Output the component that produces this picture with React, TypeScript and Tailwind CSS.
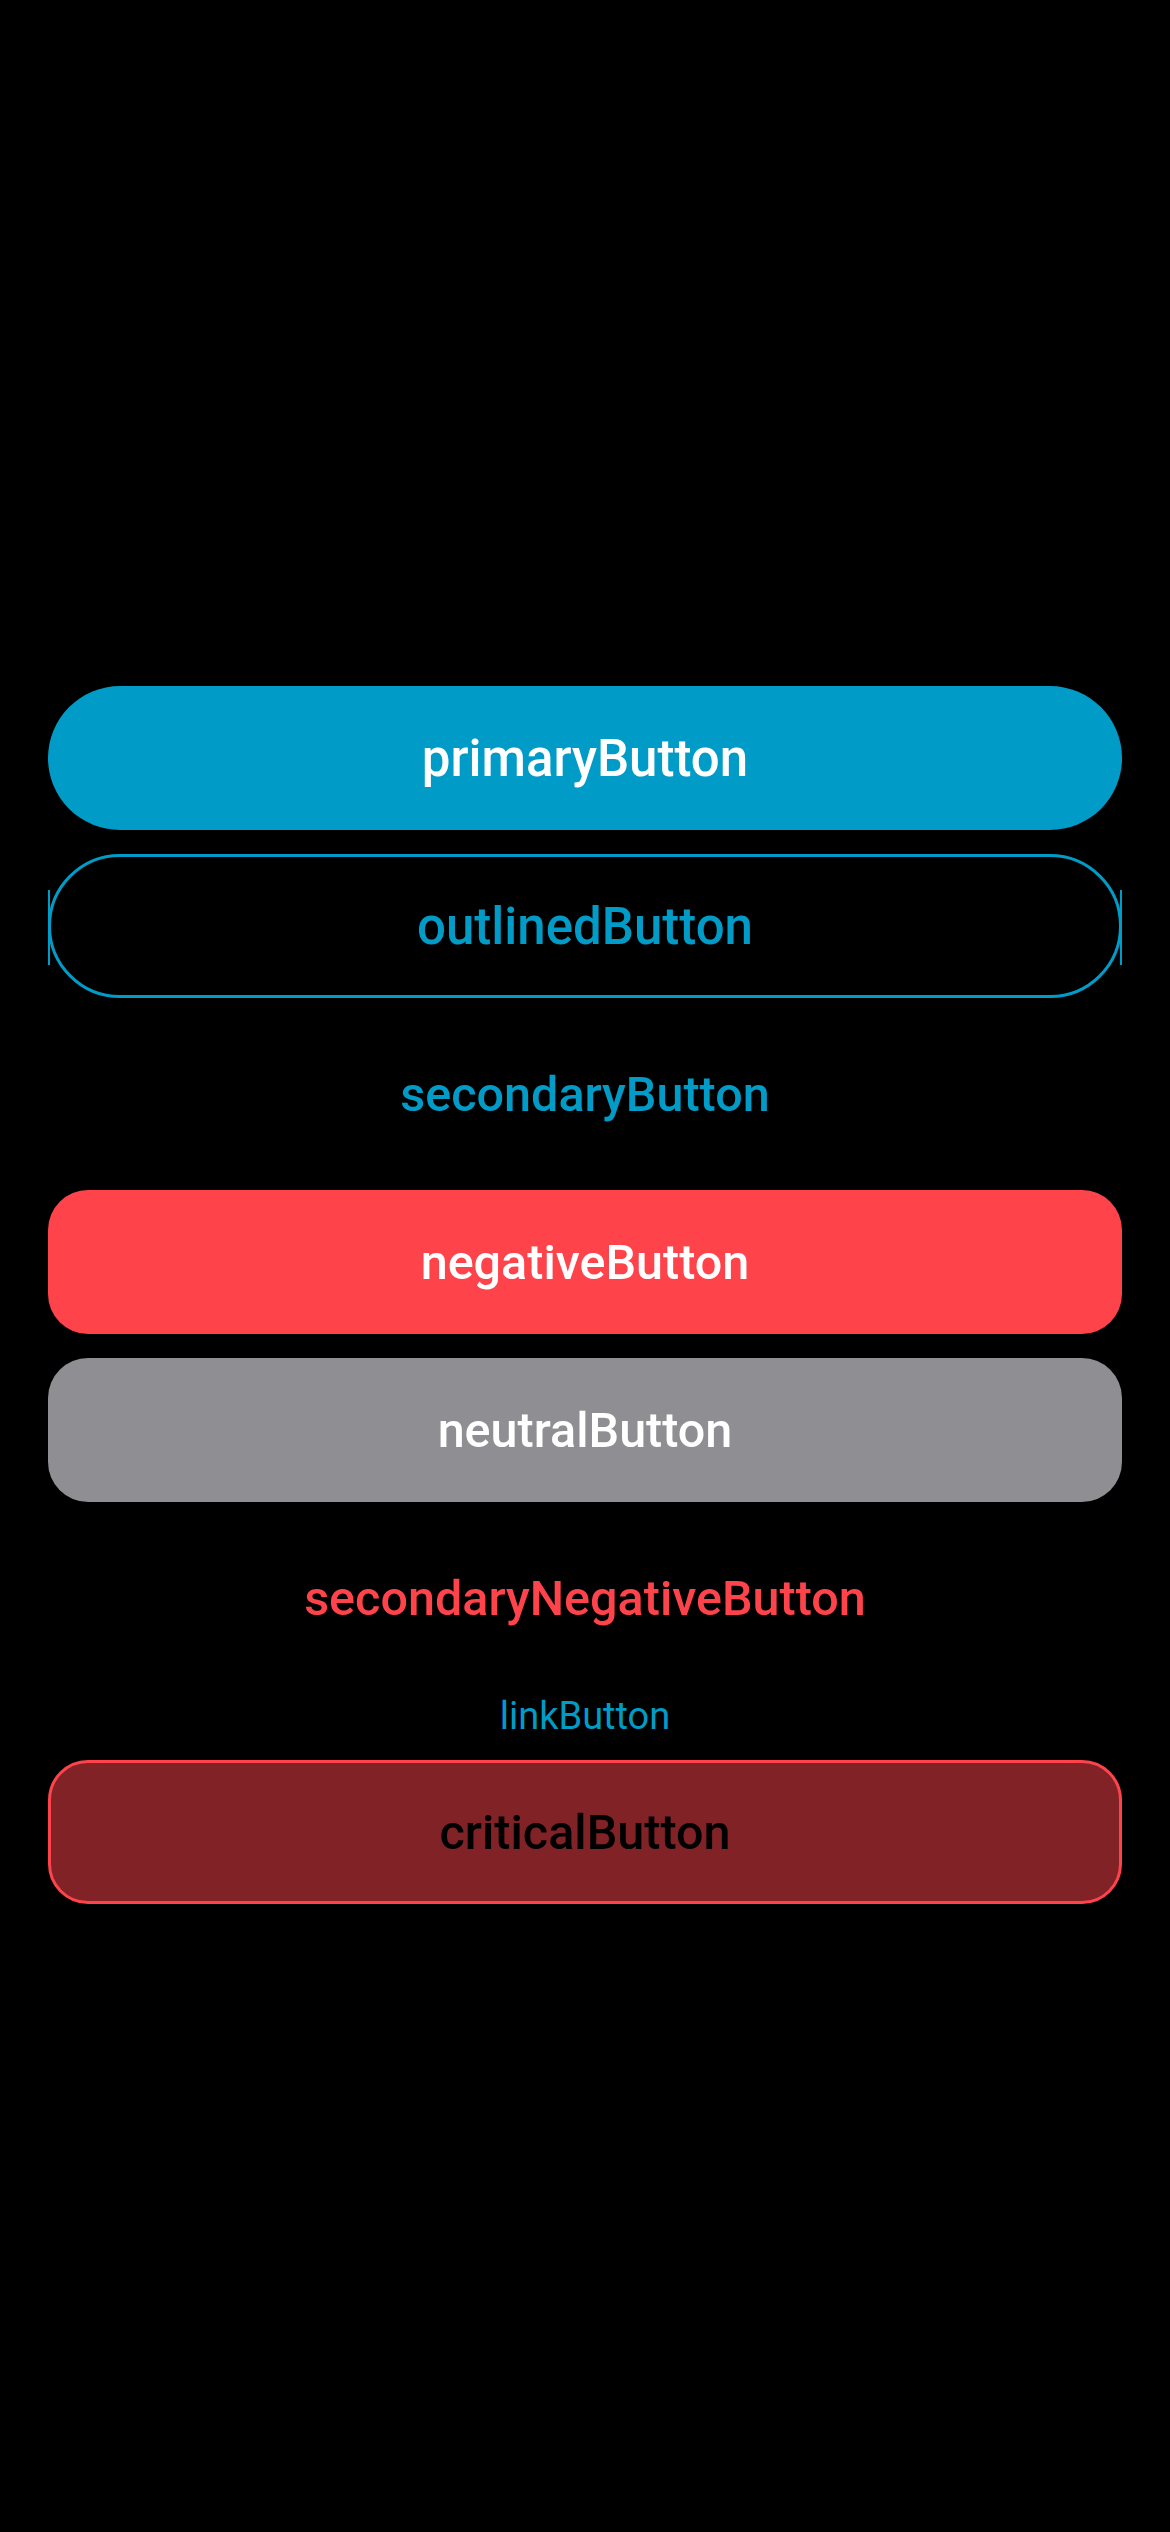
export default function App() {
  return (
    <div className="min-h-[2532px] w-[1170px] bg-black px-[48px] pt-[686px] font-['Roboto',sans-serif]">
      <div className="flex flex-col gap-[24px]">
        {/* primary */}
        <button className="flex h-[144px] w-full items-center justify-center rounded-[72px] bg-[#009cc7] pt-[2px] text-[51px] font-medium text-white">
          primaryButton
        </button>

        {/* outlined */}
        <button className="relative flex h-[144px] w-full items-center justify-center rounded-[72px] border-[3px] border-[#009cc7] pt-[2px] text-[51px] font-medium text-[#009cc7]">
          outlinedButton
          <span className="absolute left-[-3px] top-[33px] h-[75px] w-[2px] bg-[#009cc7]" />
          <span className="absolute right-[-3px] top-[33px] h-[75px] w-[2px] bg-[#009cc7]" />
        </button>

        {/* secondary */}
        <button className="flex h-[144px] w-full items-center justify-center pt-[2px] text-[48.5px] font-medium text-[#009cc7]">
          secondaryButton
        </button>

        {/* negative */}
        <button className="flex h-[144px] w-full items-center justify-center rounded-[40px] bg-[#ff434a] pt-[2px] text-[48.5px] font-medium text-white">
          negativeButton
        </button>

        {/* neutral */}
        <button className="flex h-[144px] w-full items-center justify-center rounded-[40px] bg-[#8e8e93] pt-[2px] text-[48.5px] font-medium text-white">
          neutralButton
        </button>

        {/* secondary negative */}
        <button className="flex h-[144px] w-full items-center justify-center pt-[2px] text-[48.5px] font-medium text-[#ff434a]">
          secondaryNegativeButton
        </button>

        {/* link */}
        <button className="flex h-[42px] w-full items-center justify-center pt-[2px] text-[38px] font-normal text-[#009cc7]">
          linkButton
        </button>

        {/* critical */}
        <button className="flex h-[144px] w-full items-center justify-center rounded-[40px] border-[3px] border-[#ff434a] bg-[#802226] pt-[2px] text-[48.5px] font-medium text-black">
          criticalButton
        </button>
      </div>
    </div>
  )
}
